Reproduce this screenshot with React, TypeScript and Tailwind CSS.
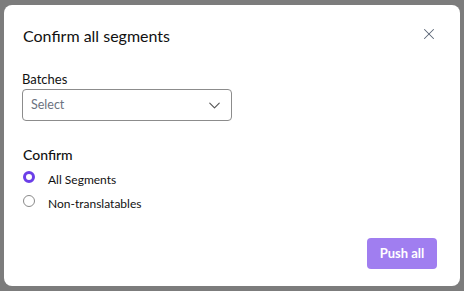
import { X, ChevronDown } from 'lucide-react'

export default function App() {
  return (
    <div className="w-[464px] h-[291px] bg-[#7c7c7c] overflow-hidden flex" style={{ fontFamily: 'Lato, "Noto Sans", sans-serif' }}>
      <div className="ml-[4px] mt-[5px] w-[456px] h-[281px] bg-white rounded-[8px] flex flex-col pl-[18px] pr-[23px] pt-[19px] pb-[17px]">
        <div className="flex items-center justify-between">
          <h2 className="text-[16px] leading-[24px] text-[#111] pl-[1px]">Confirm all segments</h2>
          <button className="text-[#5b6676] -mr-[1px] -mt-[4px]">
            <X size={18} strokeWidth={1.4} />
          </button>
        </div>

        <label className="mt-[22px] text-[13px] leading-[18px] text-[#111]">Batches</label>
        <div className="mt-[1px] w-[210px] h-[32px] border border-[#8c8c8c] rounded-[4px] flex items-center justify-between pl-[8px] pr-[7px]">
          <span className="text-[12.5px] text-[#6b7280]">Select</span>
          <ChevronDown size={19} strokeWidth={1.4} className="text-[#555]" />
        </div>

        <div className="mt-[24px] text-[14px] leading-[20px] text-[#111] font-medium pl-[1px]">Confirm</div>
        <div className="flex flex-col">
          <label className="flex items-center h-[24px]">
            <span className="w-[12px] h-[12px] rounded-full border-[3px] border-[#6b3ee8] ml-[1px]" />
            <span className="ml-[13px] mt-[6px] text-[12px] text-[#111]">All Segments</span>
          </label>
          <label className="flex items-center h-[24px]">
            <span className="w-[12px] h-[12px] rounded-full border border-[#8a8a8a] ml-[1px]" />
            <span className="ml-[13px] mt-[5px] text-[12px] text-[#111]">Non-translatables</span>
          </label>
        </div>

        <div className="mt-auto flex justify-end">
          <button className="w-[70px] h-[31px] rounded-[4px] bg-[#a07ef0] text-white text-[13px] font-bold">Push all</button>
        </div>
      </div>
    </div>
  )
}
